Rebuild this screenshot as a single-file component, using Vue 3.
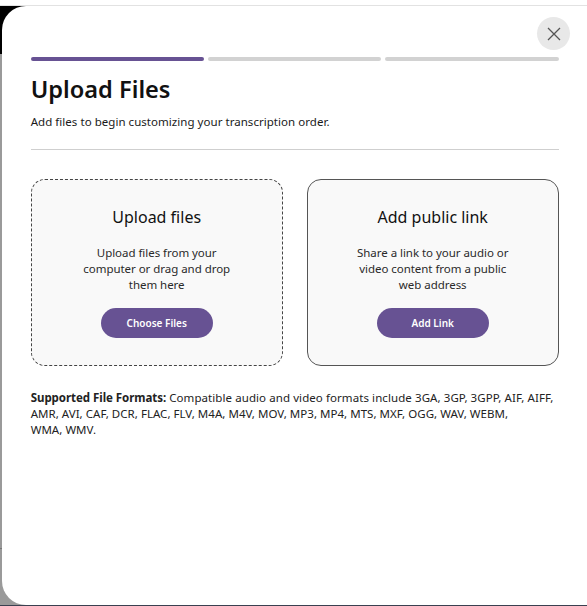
<script setup>
const steps = [true, false, false]
const cards = [
  { title: 'Upload files', lines: ['Upload files from your', 'computer or drag and drop', 'them here'], action: 'Choose Files', dashed: true },
  { title: 'Add public link', lines: ['Share a link to your audio or', 'video content from a public', 'web address'], action: 'Add Link', dashed: false }
]
</script>

<template>
  <div class="page">
    <div class="topbar"></div>
    <div class="stage">
      <div class="backdrop">
        <div class="backdrop-dark"></div>
        <div class="backdrop-rule"></div>
      </div>
      <section class="modal">
        <button class="close" aria-label="Close">
          <svg width="14" height="14" viewBox="0 0 14 14"><path d="M1 1 13 13M13 1 1 13" stroke="#555" stroke-width="1.3" fill="none" /></svg>
        </button>
        <div class="steps">
          <span v-for="(on, i) in steps" :key="i" class="step" :class="{ active: on }"></span>
        </div>
        <h1>Upload Files</h1>
        <p class="sub">Add files to begin customizing your transcription order.</p>
        <hr />
        <div class="cards">
          <article v-for="c in cards" :key="c.title" class="card" :class="{ dashed: c.dashed }">
            <h2>{{ c.title }}</h2>
            <p class="desc"><span v-for="l in c.lines" :key="l">{{ l }}</span></p>
            <button class="action">{{ c.action }}</button>
          </article>
        </div>
        <p class="formats"><span class="line first"><strong>Supported File Formats:</strong> Compatible audio and video formats include 3GA, 3GP, 3GPP, AIF, AIFF,</span><span class="line">AMR, AVI, CAF, DCR, FLAC, FLV, M4A, M4V, MOV, MP3, MP4, MTS, MXF, OGG, WAV, WEBM,</span><span class="line">WMA, WMV.</span></p>
      </section>
    </div>
    <div class="footbar"></div>
  </div>
</template>

<style>
html, body { margin: 0; background: #fff; overflow: hidden; }
</style>

<style scoped>
.page { width: 587px; height: 606px; display: flex; flex-direction: column; font-family: "Noto Sans", "Open Sans", sans-serif; color: #1a1a1a; }
.topbar { height: 5px; background: #fff; border-bottom: 1px solid #e2e2e2; flex: none; }
.stage { flex: 1; position: relative; min-height: 0; background: #fff; }
.backdrop { position: absolute; left: 0; top: 0; bottom: 0; width: 30px; background: #9a9a9a; }
.backdrop-dark { height: 48px; background: #000; }
.backdrop-rule { margin-top: 494px; height: 1px; background: #777; }
.modal { position: absolute; left: 2px; right: 0; top: 0; bottom: 0; background: #fff; border-radius: 24px 0 0 24px; padding: 51px 28.3px 0 28.7px; box-sizing: border-box; }
.footbar { height: 1px; background: #3a4050; flex: none; }
.close { position: absolute; top: 11px; right: 17px; width: 33px; height: 33px; border: 0; padding: 0; border-radius: 50%; background: #e8e8e8; display: flex; align-items: center; justify-content: center; }
.steps { display: flex; gap: 4px; }
.step { flex: 1; height: 4px; border-radius: 2px; background: #d2d2d2; }
.step.active { background: #675293; }
h1 { margin: 12px 0 0; font-size: 23.6px; line-height: 33px; font-weight: 600; color: #111; }
.sub { margin: 8px 0 0; font-size: 11.5px; line-height: 16px; letter-spacing: 0.04px; }
hr { margin: 19px 0 0; border: 0; border-top: 1px solid #cfcfcf; }
.cards { display: flex; gap: 24px; margin-top: 29px; }
.card { flex: 1; height: 187px; box-sizing: border-box; background: #f9f9f9; border: 1px solid #555; border-radius: 14px; display: flex; flex-direction: column; align-items: center; padding-top: 26px; }
.card.dashed { border-style: dashed; border-color: #444; }
h2 { margin: 0; font-size: 16px; line-height: 22px; font-weight: 400; color: #111; }
.desc { margin: 17px 0 0; display: flex; flex-direction: column; align-items: center; font-size: 11.5px; line-height: 16px; letter-spacing: -0.04px; color: #2a2a2a; }
.action { margin-top: 15px; width: 112px; height: 30px; border: 0; border-radius: 15px; background: #675293; color: #fff; font: 600 10px "Noto Sans", sans-serif; }
.formats { margin: 24px 0 0; font-size: 11.5px; line-height: 16px; letter-spacing: 0.03px; color: #222; }
.line { display: block; white-space: nowrap; }
.line.first { letter-spacing: 0.08px; }
.formats strong { font-weight: 700; letter-spacing: -0.05px; }
</style>
